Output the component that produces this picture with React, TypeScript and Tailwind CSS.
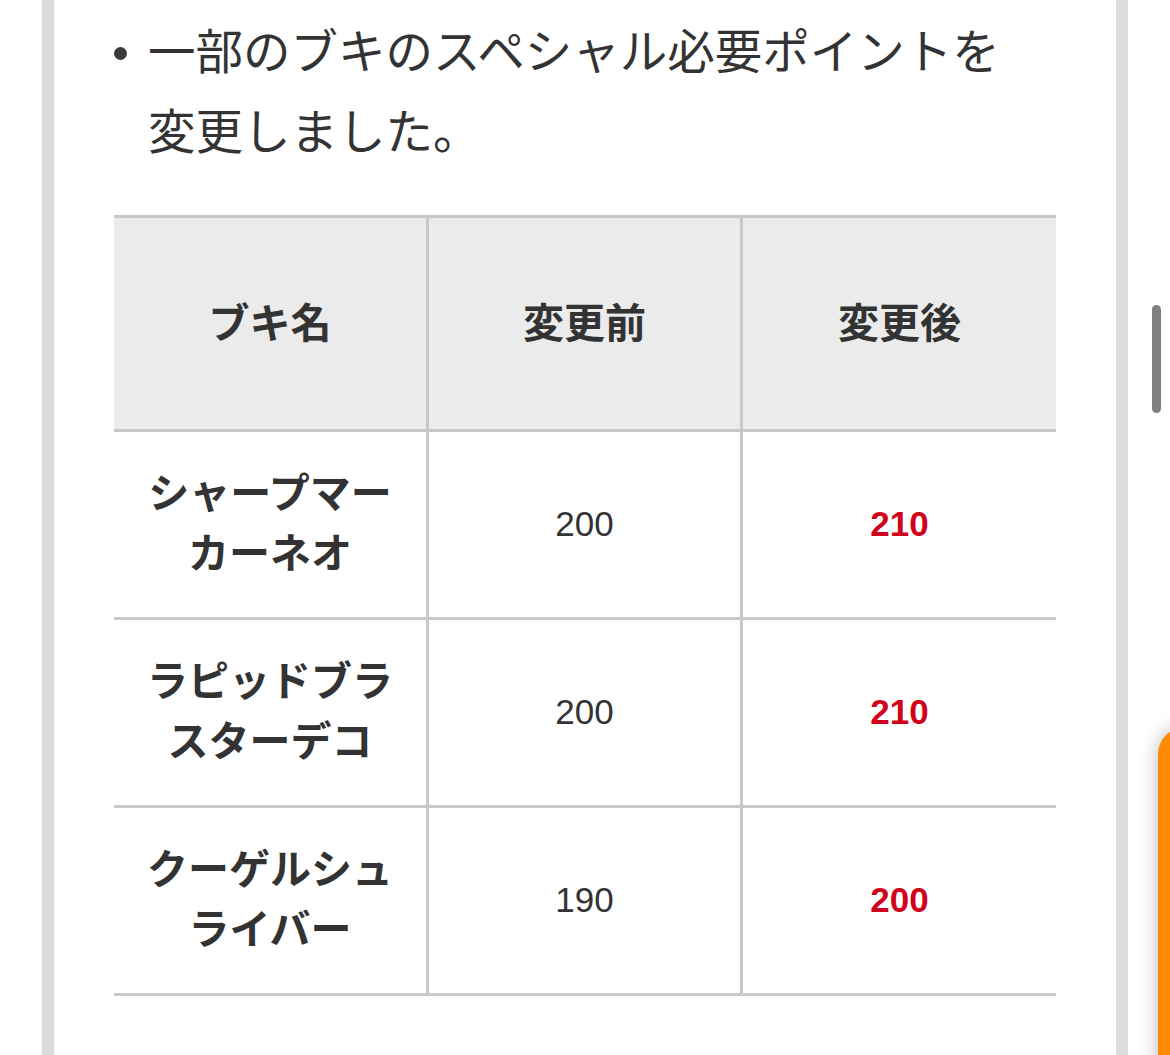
import React from "react";

const jp = "font-['Noto_Sans_CJK_JP','Noto_Sans',sans-serif]";

type Row = { name: string[]; before: string; after: string };

const rows: Row[] = [
  { name: ["シャープマー", "カーネオ"], before: "200", after: "210" },
  { name: ["ラピッドブラ", "スターデコ"], before: "200", after: "210" },
  { name: ["クーゲルシュ", "ライバー"], before: "190", after: "200" },
];

export default function App() {
  return (
    <div className={`relative w-[1170px] h-[1055px] overflow-hidden bg-white text-[#333] ${jp}`}>
      <div className="flex h-full pl-[42px]">
        <div className="w-[1086px] h-full border-x-[12px] border-[#dcdcdc] bg-white pl-[60px]">
          <div className="w-[942px]">
            <ul className="pt-[9px]">
              <li className="flex">
                <span className="w-[34px] shrink-0 pt-[38px]">
                  <span className="block w-[13px] h-[13px] rounded-full bg-[#3a3a3a]" />
                </span>
                <span className="text-[47.5px] leading-[80px] font-normal">
                  一部のブキのスペシャル必要ポイントを
                  <br />
                  変更しました。
                </span>
              </li>
            </ul>

            <div className="mt-[46px] border-t-[3px] border-[#c8c8c8]">
              <div className="grid grid-cols-[312px_314px_316px] bg-[#ebebeb] border-b-[3px] border-[#c8c8c8]">
                <div className="h-[211px] pb-[5px] flex items-center justify-center text-[41px] font-bold">ブキ名</div>
                <div className="h-[211px] pb-[5px] flex items-center justify-center text-[41px] font-bold border-l-[3px] border-[#c8c8c8]">変更前</div>
                <div className="h-[211px] pb-[5px] flex items-center justify-center text-[41px] font-bold border-l-[3px] border-[#c8c8c8]">変更後</div>
              </div>
              {rows.map((r, i) => (
                <div key={i} className="grid grid-cols-[312px_314px_316px] border-b-[3px] border-[#c8c8c8]">
                  <div className="h-[185px] pb-[10px] flex items-center justify-center text-center text-[41px] leading-[60px] font-bold">
                    <span>
                      {r.name[0]}
                      <br />
                      {r.name[1]}
                    </span>
                  </div>
                  <div className="h-[185px] flex items-center justify-center border-l-[3px] border-[#c8c8c8] font-['Liberation_Sans',sans-serif] text-[35px]">
                    {r.before}
                  </div>
                  <div className="h-[185px] flex items-center justify-center border-l-[3px] border-[#c8c8c8] font-['Liberation_Sans',sans-serif] text-[35px] font-bold text-[#d0021b]">
                    {r.after}
                  </div>
                </div>
              ))}
            </div>
          </div>
        </div>
      </div>

      {/* scrollbar */}
      <div className="absolute left-[1152px] top-[305px] w-[9px] h-[108px] rounded-full bg-[#808080]" />

      {/* orange floating tab */}
      <div className="absolute left-[1158px] top-[728px] w-[40px] h-[400px] rounded-tl-[26px] bg-[#ff8a00] shadow-[0_0_18px_rgba(0,0,0,0.28)]" />
    </div>
  );
}
